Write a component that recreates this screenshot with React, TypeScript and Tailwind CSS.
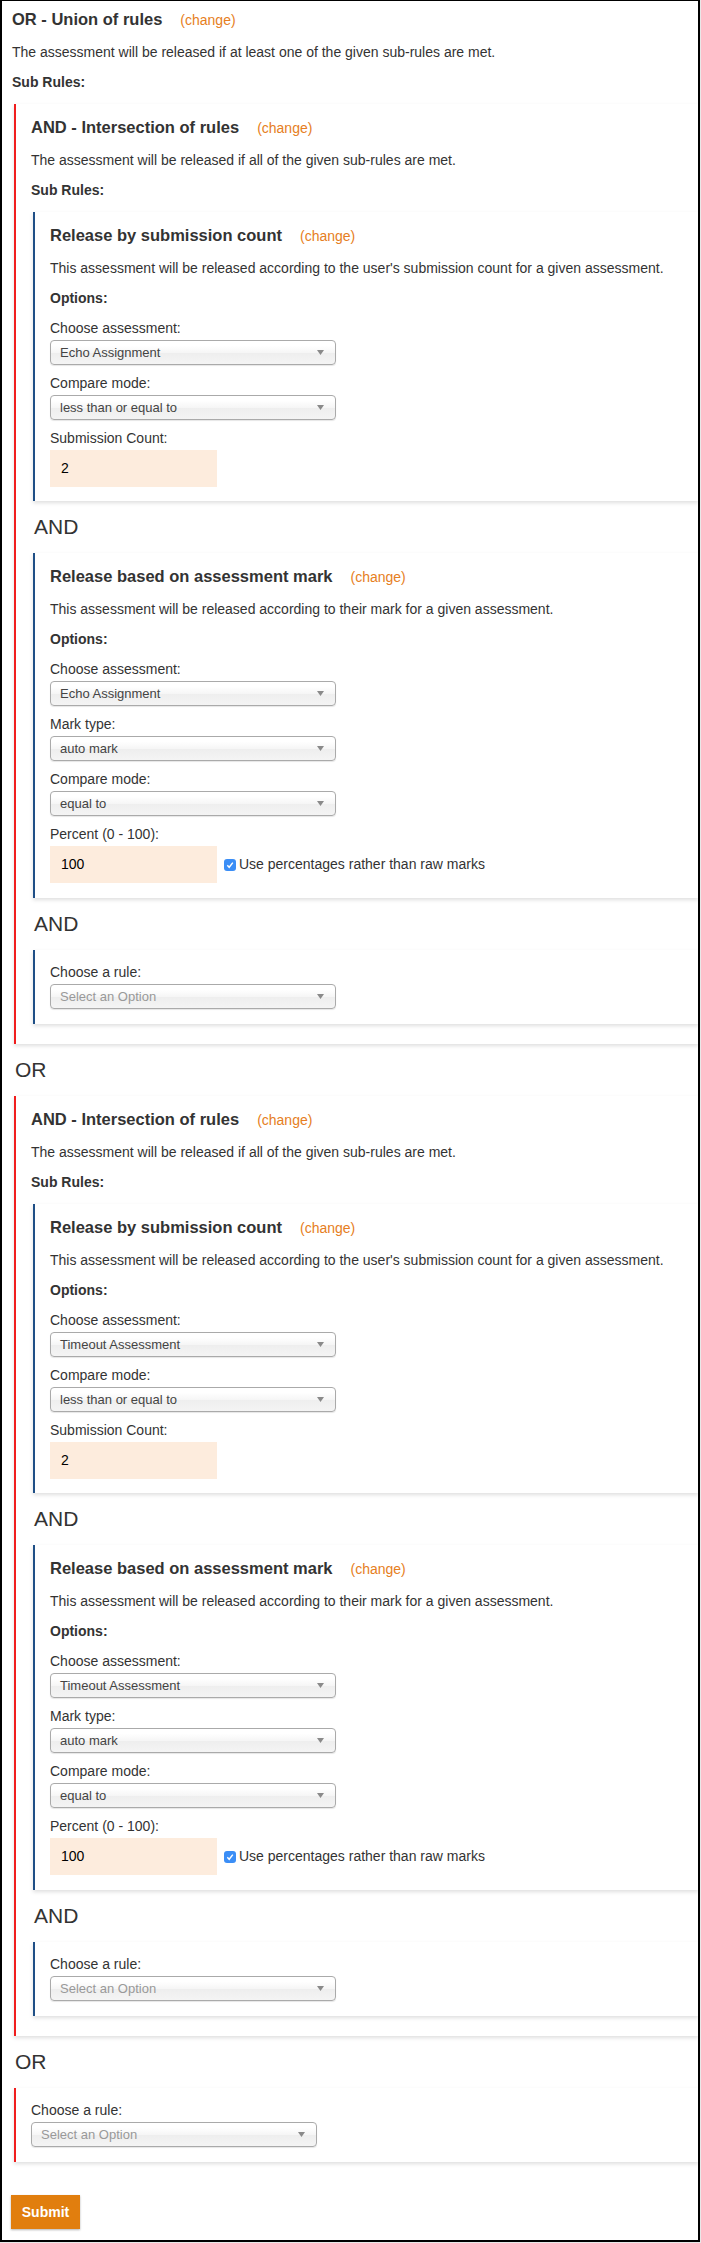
import React from 'react';

function Heading({ title }: { title: string }) {
  return (
    <h3 className="text-[16.5px] font-bold leading-[22px] text-[#333]">
      {title}
      <span className="ml-[18px] text-[14px] font-normal leading-none text-[#e67e22]">(change)</span>
    </h3>
  );
}

function Desc({ children }: { children: React.ReactNode }) {
  return <p className="mt-[12px] text-[14px] leading-[20px]">{children}</p>;
}

function Bold({ children }: { children: React.ReactNode }) {
  return <p className="mt-[10px] text-[14px] font-bold leading-[20px]">{children}</p>;
}

function Label({ children, first }: { children: React.ReactNode; first?: boolean }) {
  return (
    <div className={`${first ? 'mt-[10px]' : 'mt-[8px]'} text-[14px] leading-[20px]`}>{children}</div>
  );
}

function Select({ value, placeholder }: { value: string; placeholder?: boolean }) {
  return (
    <div className="mt-[2px] flex h-[25px] w-[286px] items-center justify-between rounded-[4px] border border-[#aaa] bg-[linear-gradient(#fff_20%,#f6f6f6_50%,#eee_52%,#f4f4f4_100%)] pl-[9px] pr-[11px] text-[13px] shadow-[0_1px_1px_rgba(0,0,0,0.1)]">
      <span className={placeholder ? 'text-[#999]' : 'text-[#444]'}>{value}</span>
      <svg width="7" height="5" viewBox="0 0 7 5">
        <path d="M0 0h7L3.5 5z" fill="#8a8a8a" />
      </svg>
    </div>
  );
}

function NumberBox({ value }: { value: string }) {
  return (
    <div className="flex h-[37px] w-[167px] items-center bg-[#fdecdd] pl-[11px] text-[14px] text-black">
      {value}
    </div>
  );
}

function Sep({ children }: { children: React.ReactNode }) {
  return <div className="mb-[15px] ml-[3px] mt-[14px] text-[21px] leading-[23px] text-[#333]">{children}</div>;
}

function Card({
  red,
  className = '',
  children,
}: {
  red?: boolean;
  className?: string;
  children: React.ReactNode;
}) {
  return (
    <div
      className={`ml-[2px] border-l-2 ${red ? 'border-[#f01d1d]' : 'border-[#1f4f86]'} bg-white pl-[15px] pt-[12px] shadow-[0_2px_4px_rgba(0,0,0,0.13)] ${className}`}
    >
      {children}
    </div>
  );
}

function SubmissionCount({ assessment }: { assessment: string }) {
  return (
    <Card className="mt-[12px] pb-[14px]">
      <Heading title="Release by submission count" />
      <Desc>This assessment will be released according to the user's submission count for a given assessment.</Desc>
      <Bold>Options:</Bold>
      <Label first>Choose assessment:</Label>
      <Select value={assessment} />
      <Label>Compare mode:</Label>
      <Select value="less than or equal to" />
      <Label>Submission Count:</Label>
      <div className="mt-[2px]">
        <NumberBox value="2" />
      </div>
    </Card>
  );
}

function AssessmentMark({ assessment }: { assessment: string }) {
  return (
    <Card className="pb-[15px]">
      <Heading title="Release based on assessment mark" />
      <Desc>This assessment will be released according to their mark for a given assessment.</Desc>
      <Bold>Options:</Bold>
      <Label first>Choose assessment:</Label>
      <Select value={assessment} />
      <Label>Mark type:</Label>
      <Select value="auto mark" />
      <Label>Compare mode:</Label>
      <Select value="equal to" />
      <Label>Percent (0 - 100):</Label>
      <div className="mt-[2px] flex items-center">
        <NumberBox value="100" />
        <span className="ml-[7px] flex h-[12px] w-[12px] items-center justify-center rounded-[3px] bg-[#3b8ef6]">
          <svg width="10" height="10" viewBox="0 0 10 10">
            <path d="M2.3 5.3l1.9 2L7.8 2.6" fill="none" stroke="#fff" strokeWidth="1.4" />
          </svg>
        </span>
        <span className="ml-[3px] text-[14px]">Use percentages rather than raw marks</span>
      </div>
    </Card>
  );
}

function ChooseRule({ red, className = '' }: { red?: boolean; className?: string }) {
  return (
    <Card red={red} className={`pb-[15px] ${className}`}>
      <div className="text-[14px] leading-[20px]">Choose a rule:</div>
      <Select value="Select an Option" placeholder />
    </Card>
  );
}

function AndGroup({ assessment, className = '' }: { assessment: string; className?: string }) {
  return (
    <Card red className={`pb-[20px] ${className}`}>
      <Heading title="AND - Intersection of rules" />
      <Desc>The assessment will be released if all of the given sub-rules are met.</Desc>
      <Bold>Sub Rules:</Bold>
      <SubmissionCount assessment={assessment} />
      <Sep>AND</Sep>
      <AssessmentMark assessment={assessment} />
      <Sep>AND</Sep>
      <ChooseRule />
    </Card>
  );
}

export default function App() {
  return (
    <div className="min-h-screen bg-[#e8e8e8] font-['Liberation_Sans',Arial,Helvetica,sans-serif] text-[#333]">
      <div className="w-[700px] overflow-hidden border-x-2 border-b-2 border-t border-black bg-white pb-[11px] pl-[10px] pt-[7px]">
        <Heading title="OR - Union of rules" />
        <Desc>The assessment will be released if at least one of the given sub-rules are met.</Desc>
        <Bold>Sub Rules:</Bold>
        <AndGroup assessment="Echo Assignment" className="mt-[12px]" />
        <Sep>OR</Sep>
        <AndGroup assessment="Timeout Assessment" />
        <Sep>OR</Sep>
        <ChooseRule red />
        <button className="-ml-[1px] mt-[33px] block h-[34px] w-[69px] bg-[#e17e0e] text-[14px] font-bold text-white shadow-[0_1px_2px_rgba(0,0,0,0.3)]">
          Submit
        </button>
      </div>
    </div>
  );
}
